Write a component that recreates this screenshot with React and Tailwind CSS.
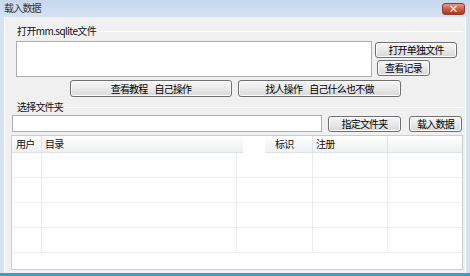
const font = { fontFamily: '"Noto Sans CJK SC", "Liberation Sans", sans-serif' };

const Btn = ({ className, children }) => (
  <div
    className={`flex items-center justify-center rounded-[3px] border border-[#707070] bg-gradient-to-b from-[#f6f6f6] via-[#e9e9e9] to-[#d8d8d8] text-[10px] tracking-[-0.8px] leading-none text-black shadow-[inset_0_0_0_1px_#fcfcfc] ${className}`}
  >
    {children}
  </div>
);

const Gap = () => <span className="inline-block w-[7px]"></span>;

const App = () => {
  const rows = [0, 1, 2, 3];

  return (
    <div className="w-[470px] h-[276px] bg-[#d5e2f1] flex flex-col overflow-hidden" style={font}>
      {/* title bar */}
      <div className="h-[17px] flex items-start justify-between bg-gradient-to-b from-[#c6d7ee] to-[#d4e2f3]">
        <span className="pl-[4px] pt-[2px] text-[10px] tracking-[-0.8px] leading-[12px] text-[#333]">载入数据</span>
        <div className="mt-[3px] mr-[5px] w-[23px] h-[12px] rounded-[3px] border border-[#8b3a2e] bg-gradient-to-b from-[#e29a88] via-[#cf5a45] to-[#b8321f] flex items-center justify-center text-white text-[10px] font-bold leading-none">
          ×
        </div>
      </div>

      {/* window body */}
      <div className="flex-1 mx-[4px] bg-[#f0f0f0] border-x border-white flex flex-col">
        {/* group 1 label */}
        <div className="mt-[7px] h-[14px] flex items-center">
          <span className="ml-[12px] pr-[1px] text-[10px] tracking-[-0.6px] leading-[14px] text-[#111]">打开mm.sqlite文件</span>
          <div className="flex-1 mr-[2px] h-px bg-[#d5d5d5] border-b border-white"></div>
        </div>

        <div className="mt-[3px] flex">
          <div className="ml-[11px] w-[356px] h-[36px] bg-white border border-[#abadb3]"></div>
          <div className="ml-[3px] flex flex-col">
            <Btn className="mt-[1px] w-[82px] h-[16px]">打开单独文件</Btn>
            <Btn className="mt-[2px] ml-[2px] w-[53px] h-[16px]">查看记录</Btn>
          </div>
        </div>

        <div className="mt-[3px] flex">
          <Btn className="ml-[65px] w-[162px] h-[17px]">查看教程<Gap />自己操作</Btn>
          <Btn className="ml-[6px] w-[163px] h-[17px]">找人操作<Gap />自己什么也不做</Btn>
        </div>

        {/* group 2 label */}
        <div className="mt-[3px] h-[14px] flex items-center">
          <span className="ml-[12px] pr-[1px] text-[10px] tracking-[-0.8px] leading-[14px] text-[#111]">选择文件夹</span>
          <div className="flex-1 mr-[2px] h-px bg-[#dcdcdc] border-b border-white"></div>
        </div>

        <div className="mt-[1px] flex items-start">
          <div className="ml-[7px] w-[310px] h-[17px] bg-white border border-[#abadb3]"></div>
          <Btn className="mt-[1px] ml-[6px] w-[73px] h-[16px]">指定文件夹</Btn>
          <Btn className="mt-[1px] ml-[8px] w-[53px] h-[16px]">载入数据</Btn>
        </div>

        {/* list view */}
        <div className="mt-[3px] ml-[6px] w-[452px] h-[135px] bg-white border border-[#c9ccd1] flex flex-col overflow-hidden">
          <div className="h-[17px] flex text-[10px] tracking-[-0.8px] leading-[16px] text-[#111]">
            <div className="w-[30px] pl-[4px] bg-gradient-to-b from-white to-[#eef0f3] border-r border-b border-[#dfe2e6]">用户</div>
            <div className="w-[201px] pl-[3px] bg-gradient-to-b from-white to-[#eef0f3] border-b border-[#dfe2e6]">目录</div>
            <div className="w-[22px] bg-white"></div>
            <div className="w-[48px] pl-[10px] bg-gradient-to-b from-white to-[#eef0f3] border-r border-b border-[#dfe2e6]">标识</div>
            <div className="w-[75px] pl-[3px] bg-gradient-to-b from-white to-[#eef0f3] border-r border-b border-[#dfe2e6]">注册</div>
            <div className="flex-1 bg-gradient-to-b from-white to-[#eef0f3] border-b border-[#dfe2e6]"></div>
          </div>
          {rows.map((r) => (
            <div key={r} className="h-[25px] shrink-0 flex border-b border-[#efefef]">
              <div className="w-[30px] border-r border-[#ececec]"></div>
              <div className="w-[195px] border-r border-[#ececec]"></div>
              <div className="w-[76px] border-r border-[#ececec]"></div>
              <div className="w-[75px] border-r border-[#ececec]"></div>
              <div className="flex-1"></div>
            </div>
          ))}
        </div>
      </div>

      {/* bottom edge */}
      <div className="h-[3px] bg-[#3a9fc4]"></div>
    </div>
  );
};

export default App;
